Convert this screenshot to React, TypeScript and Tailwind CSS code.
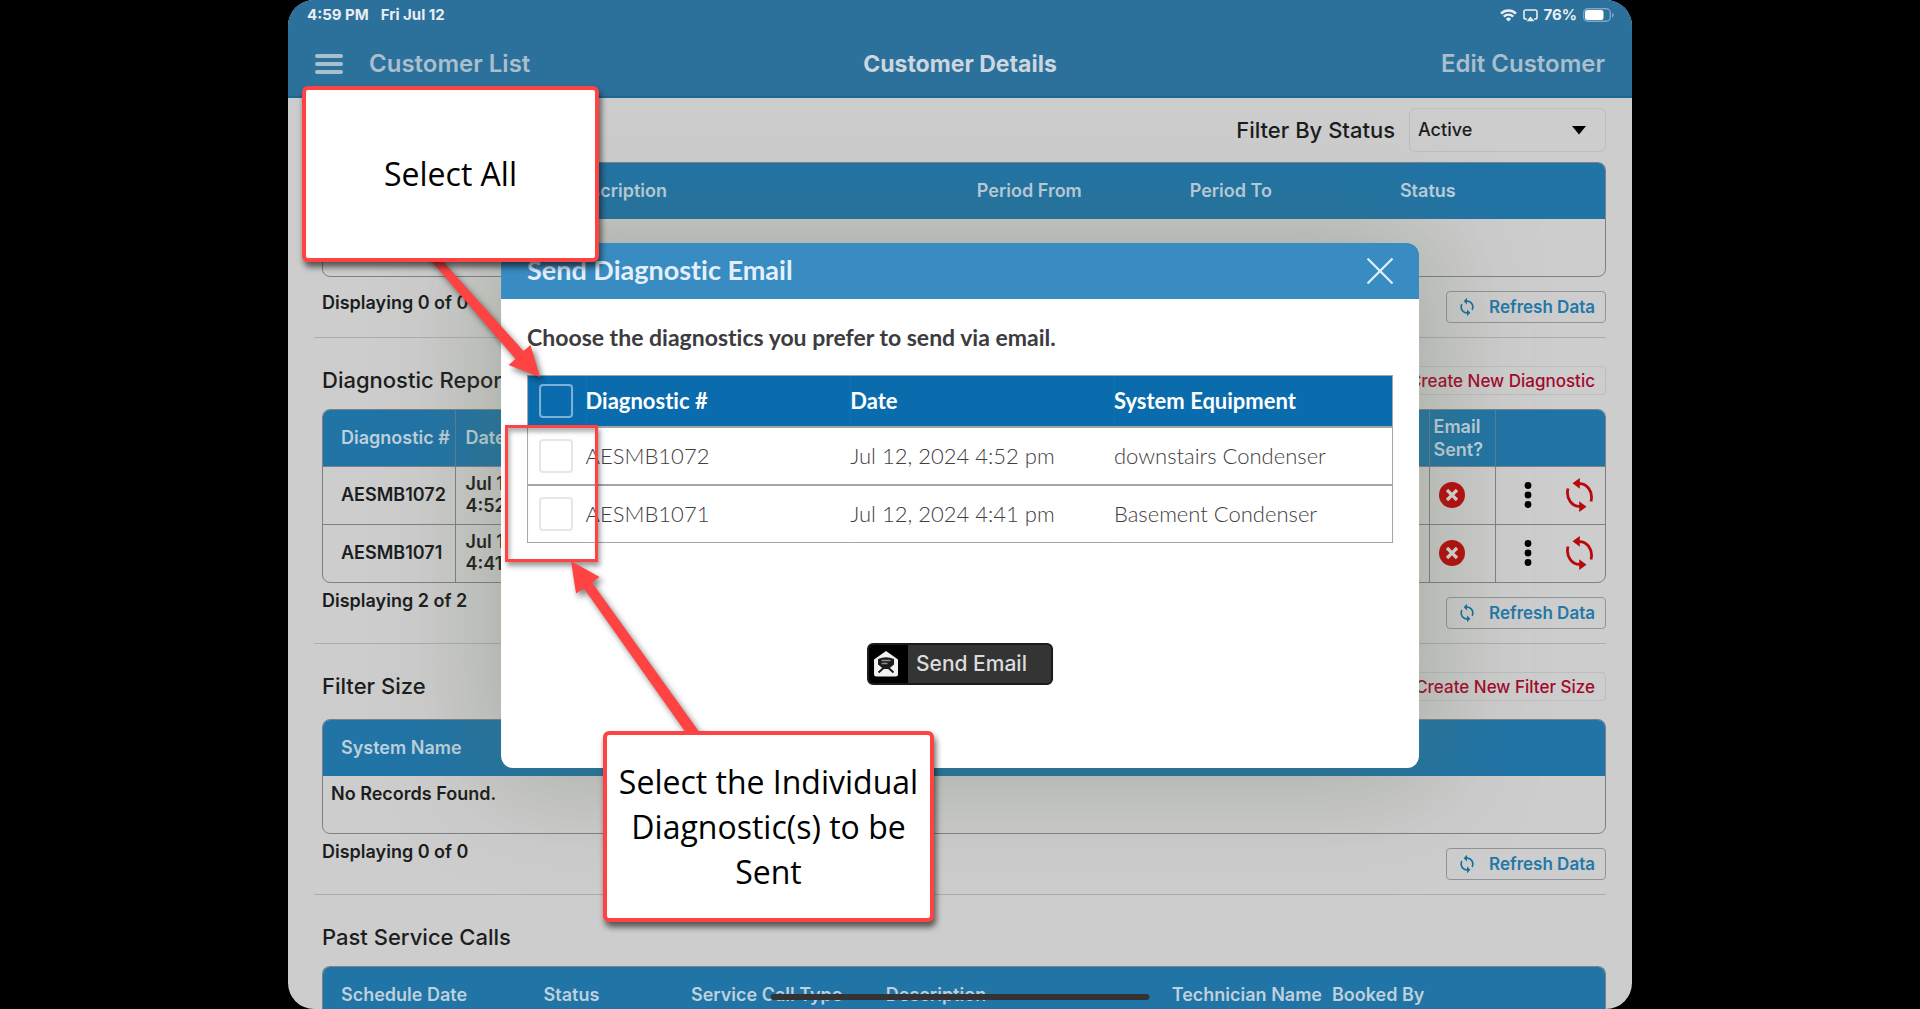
import React from "react";
import { MdSync } from "react-icons/md";

function StatusBar() {
  return (
    <div className="flex h-[30px] items-center justify-between pl-[19px] pr-[18px] text-[15px] font-bold text-[#e8eef2]">
      <div className="flex gap-3">
        <span>4:59 PM</span>
        <span>Fri Jul 12</span>
      </div>
      <div className="flex items-center gap-1.5">
        <svg width="17" height="13" viewBox="0 0 17 13" fill="none" stroke="currentColor" strokeWidth="2.4" aria-hidden="true">
          <path d="M1 4.6a10.6 10.6 0 0 1 15 0" />
          <path d="M3.8 7.6a6.6 6.6 0 0 1 9.4 0" />
          <path d="M8.500 12.600 5.900 9.900a3.700 3.700 0 0 1 5.200 0z" fill="currentColor" stroke="none" />
        </svg>
        <svg width="15" height="13" viewBox="0 0 15 13" fill="none" stroke="currentColor" strokeWidth="1.6" aria-hidden="true">
          <path d="M4 10H2.800A1.800 1.800 0 0 1 1 8.200V2.800A1.800 1.800 0 0 1 2.800 1h9.400A1.800 1.800 0 0 1 14 2.800v5.400a1.800 1.800 0 0 1-1.800 1.800H11" />
          <path d="M7.500 7.500 11.500 12.200h-8z" fill="currentColor" stroke="none" />
        </svg>
        <span>76%</span>
        <svg width="31" height="14" viewBox="0 0 31 14" fill="none" aria-hidden="true">
          <rect x="0.700" y="0.700" width="26.600" height="12.600" rx="4" stroke="#7ea6c1" strokeWidth="1.400" />
          <rect x="2" y="2" width="18.500" height="10" rx="2.500" fill="#fff" />
          <path d="M29 5v4.500c1.200-.4 1.800-1.200 1.800-2.200S30.200 5.400 29 5z" fill="#7ea6c1" />
        </svg>
      </div>
    </div>
  );
}

function NavBar() {
  return (
    <div className="grid h-[66px] grid-cols-3 items-center px-[27px] pt-0.5 text-2xl font-semibold text-[#a9bfcc]">
      <div className="flex items-center gap-[26px]">
        <button type="button" aria-label="Menu" className="flex w-7 flex-col gap-1">
          <span className="h-1 rounded-sm bg-[#a9bfcc]" />
          <span className="h-1 rounded-sm bg-[#a9bfcc]" />
          <span className="h-1 rounded-sm bg-[#a9bfcc]" />
        </button>
        <a href="#customers">Customer List</a>
      </div>
      <h1 className="text-center text-[23px] font-bold text-[#ccd6df]">Customer Details</h1>
      <a href="#edit" className="text-right">Edit Customer</a>
    </div>
  );
}

function TableFrame({ children, open = false }: { children: React.ReactNode; open?: boolean }) {
  return (
    <div className={open ? "overflow-hidden rounded-t-lg border border-b-0 border-[#7d8184]" : "overflow-hidden rounded-lg border border-[#7d8184]"}>
      {children}
    </div>
  );
}

function ColumnHeads({ names }: { names: string[] }) {
  return (
    <thead>
      <tr className="h-14 bg-[#2174a6] text-left text-[#bdd0dc]">
        {names.map((n, i) => (
          <th key={i} className="pl-[18px] font-semibold whitespace-nowrap">{n}</th>
        ))}
      </tr>
    </thead>
  );
}

function SectionFooter({ text, tight = false }: { text: string; tight?: boolean }) {
  return (
    <div className="flex items-start justify-between">
      <p className={tight ? "pt-1.5 leading-6 font-semibold" : "pt-3.5 leading-6 font-semibold"}>{text}</p>
      <button type="button" className="mt-3.5 flex h-8 items-center gap-3 rounded border border-[#8f9497] px-2.5 text-[17px] font-semibold text-[#2478a8]">
        <MdSync className="size-5 text-[#176f9d]" />
        Refresh Data
      </button>
    </div>
  );
}

function SectionTitle({ title, action }: { title: string; action?: string }) {
  return (
    <div className="flex h-[29px] items-center justify-between">
      <h2 className="text-[22px] font-medium">{title}</h2>
      {action && (
        <button type="button" className="h-[29px] rounded border border-[#bbbdbe] px-2.5 text-[17px] leading-6 font-medium text-[#a3092c]">
          {action}
        </button>
      )}
    </div>
  );
}

function ResendIcon() {
  return (
    <svg width="27" height="34" viewBox="0 0 27 34" aria-hidden="true" fill="none" stroke="#b80a0a" strokeWidth="2.800">
      <path d="M12.500 5.600C20.500 5 27.500 13 25 23.500" />
      <path d="M6.500 5.200 13.800 0v10.800z" fill="#b80a0a" stroke="none" />
      <path d="M14.500 28.400C6.500 29-.5 21 2 10.500" />
      <path d="M20.500 28.800 13.200 34V23.200z" fill="#b80a0a" stroke="none" />
    </svg>
  );
}

function ReportRow({ id, time }: { id: string; time: string }) {
  return (
    <tr className="h-[58px] border-t border-[#7d8184] font-semibold">
      <td className="pl-[18px]">{id}</td>
      <td className="border-l border-[#7d8184] pl-2.5 leading-[22px]">Jul 12, 2024<br />{time}</td>
      <td />
      <td className="border-l border-[#7d8184] pl-[9px]">
        <svg width="26" height="26" viewBox="0 0 26 26" role="img" aria-label="Not sent">
          <circle cx="13" cy="13" r="13" fill="#b80a0a" />
          <path d="M8 8l10 10M18 8l-10 10" stroke="#d9d6d6" strokeWidth="3.200" />
        </svg>
      </td>
      <td className="border-l border-[#7d8184] pr-3 pl-7">
        <div className="flex items-center justify-between">
          <button type="button" aria-label="More">
            <svg width="8" height="26" viewBox="0 0 8 26" aria-hidden="true">
              <circle cx="4" cy="3.500" r="3.400" />
              <circle cx="4" cy="13" r="3.400" />
              <circle cx="4" cy="22.500" r="3.400" />
            </svg>
          </button>
          <button type="button" aria-label="Resend"><ResendIcon /></button>
        </div>
      </td>
    </tr>
  );
}

function CustomerPage() {
  return (
    <main className="px-[26px] text-lg text-[#1c1d1e]">
      <section className="border-b border-[#aaaeb0] pt-2.5 pb-3.5 pl-2">
        <div className="flex h-11 items-center justify-end gap-3.5">
          <label htmlFor="status" className="text-[22px] font-medium">Filter By Status</label>
          <div className="relative h-11 w-[197px]">
            <select id="status" className="h-full w-full appearance-none rounded-md border border-[#bcbec0] bg-transparent pl-2 text-lg font-medium">
              <option>Active</option>
            </select>
            <svg className="pointer-events-none absolute top-[18px] right-5" width="14" height="9" viewBox="0 0 14 9" aria-hidden="true">
              <path d="M0 0h14L7 8.500z" />
            </svg>
          </div>
        </div>
        <div className="mt-2.5">
          <TableFrame>
            <table className="w-full table-fixed">
              <colgroup>
                <col className="w-[17.6%]" /><col className="w-[32%]" /><col className="w-[16.6%]" /><col className="w-[16.4%]" /><col />
              </colgroup>
              <ColumnHeads names={["", "Description", "Period From", "Period To", "Status"]} />
              <tbody><tr className="h-[57px]"><td colSpan={5} /></tr></tbody>
            </table>
          </TableFrame>
        </div>
        <SectionFooter text="Displaying 0 of 0" />
      </section>

      <section className="border-b border-[#aaaeb0] pt-7 pb-3.5 pl-2">
        <SectionTitle title="Diagnostic Reports" action="Create New Diagnostic" />
        <div className="mt-3.5">
          <TableFrame>
            <table className="w-full table-fixed border-collapse">
              <colgroup>
                <col className="w-[132px]" /><col className="w-[144px]" /><col /><col className="w-[66px]" /><col className="w-[110px]" />
              </colgroup>
              <thead>
                <tr className="h-14 bg-[#2174a6] text-left leading-[23px] text-[#bdd0dc]">
                  <th className="pl-[18px] font-semibold whitespace-nowrap">Diagnostic #</th>
                  <th className="border-l border-[#5c7f92] pl-2.5 font-semibold">Date</th>
                  <th />
                  <th className="border-l border-[#5c7f92] pl-1 font-semibold">Email Sent?</th>
                  <th className="border-l border-[#5c7f92]" />
                </tr>
              </thead>
              <tbody>
                <ReportRow id="AESMB1072" time="4:52 PM" />
                <ReportRow id="AESMB1071" time="4:41 PM" />
              </tbody>
            </table>
          </TableFrame>
        </div>
        <SectionFooter text="Displaying 2 of 2" tight />
      </section>

      <section className="border-b border-[#aaaeb0] pt-7 pb-3.5 pl-2">
        <SectionTitle title="Filter Size" action="Create New Filter Size" />
        <div className="mt-[18px]">
          <TableFrame>
            <table className="w-full">
              <ColumnHeads names={["System Name"]} />
              <tbody><tr className="h-[57px]"><td className="pt-1 pl-2 align-top font-semibold">No Records Found.</td></tr></tbody>
            </table>
          </TableFrame>
        </div>
        <SectionFooter text="Displaying 0 of 0" tight />
      </section>

      <section className="pt-7 pl-2">
        <SectionTitle title="Past Service Calls" />
        <div className="mt-3.5">
          <TableFrame open>
            <table className="w-full table-fixed">
              <colgroup>
                <col className="w-[15.8%]" /><col className="w-[11.5%]" /><col className="w-[15.2%]" /><col className="w-[22.3%]" /><col className="w-[12.5%]" /><col />
              </colgroup>
              <ColumnHeads names={["Schedule Date", "Status", "Service Call Type", "Description", "Technician Name", "Booked By"]} />
            </table>
          </TableFrame>
        </div>
      </section>
    </main>
  );
}

const diagnostics = [
  { id: "AESMB1072", date: "Jul 12, 2024 4:52 pm", equipment: "downstairs Condenser" },
  { id: "AESMB1071", date: "Jul 12, 2024 4:41 pm", equipment: "Basement Condenser" },
];

function EmailDialog() {
  return (
    <div role="dialog" aria-labelledby="dialog-title" className="absolute top-[243px] left-1/2 w-[68.3%] -translate-x-1/2 overflow-hidden rounded-xl bg-white font-['Lato',sans-serif] shadow-[0_0_110px_10px_rgba(90,105,75,0.35)] [font-variant-ligatures:none]">
      <header className="flex h-14 items-center justify-between bg-[#388cc1] px-[26px] text-[#e3effc]">
        <h2 id="dialog-title" className="pb-0.5 text-[27px] leading-8 font-bold">Send Diagnostic Email</h2>
        <button type="button" aria-label="Close">
          <svg width="26" height="26" viewBox="0 0 26 26" stroke="currentColor" strokeWidth="2.200" aria-hidden="true">
            <path d="M0.500 0.500l25 25M25.500 0.500l-25 25" />
          </svg>
        </button>
      </header>
      <div className="px-[26px] pt-6 pb-[83px]">
        <p className="text-[23px] leading-7 font-bold text-[#3c3c40]">Choose the diagnostics you prefer to send via email.</p>
        <table className="mt-6 w-full table-fixed border-collapse border border-[#a3a5a7] text-left text-[22px]">
          <colgroup>
            <col className="w-[58px]" /><col /><col className="w-[30.5%]" /><col className="w-[32.2%]" />
          </colgroup>
          <thead>
            <tr className="h-[51px] bg-[#0b6cad] text-white">
              <th className="pl-[11px]">
                <input type="checkbox" aria-label="Select all diagnostics" className="block size-[34px] appearance-none rounded border-2 border-[#7fb0d8] bg-transparent" />
              </th>
              <th className="font-bold">Diagnostic #</th>
              <th className="font-bold">Date</th>
              <th className="font-bold">System Equipment</th>
            </tr>
          </thead>
          <tbody>
            {diagnostics.map((d) => (
              <tr key={d.id} className="h-[58px] border-t-2 border-[#a3a5a7] font-light text-[#3f4044]">
                <td className="pl-[11px]">
                  <input type="checkbox" aria-label={d.id} className="block size-[34px] appearance-none rounded border-2 border-[#e6e6e6] bg-white" />
                </td>
                <td>{d.id}</td>
                <td>{d.date}</td>
                <td>{d.equipment}</td>
              </tr>
            ))}
          </tbody>
        </table>
        <button type="button" className="mx-auto mt-[100px] flex h-[42px] w-[186px] items-stretch overflow-hidden rounded-md border-2 border-[#1b1b1b] bg-[#343434] font-['Inter',sans-serif] text-[21px] font-medium text-[#dcdcdc]">
          <span className="flex w-[39px] items-center justify-center bg-black pr-1">
            <svg width="26" height="26" viewBox="0 0 26 26" aria-hidden="true">
              <path d="M13 0 25 8.500V23a2.500 2.500 0 0 1-2.500 2.500h-19A2.500 2.500 0 0 1 1 23V8.500z" fill="#f2f2f2" />
              <path d="M5 8Q13 4.500 21 8v5.500L15.500 18h-5L5 13.500z" fill="#1b1b1b" />
              <path d="M8.500 9.500h9M8.500 12.500h6" stroke="#8a8a8a" strokeWidth="1.500" />
              <path d="M10.500 17 5.500 21.500M15.500 17l5 4.500" stroke="#1b1b1b" strokeWidth="2" fill="none" />
            </svg>
          </span>
          <span className="self-center pl-2">Send Email</span>
        </button>
      </div>
    </div>
  );
}

function Annotations() {
  return (
    <div className="pointer-events-none font-['Open_Sans',sans-serif] text-[32px] leading-[45px] text-black">
      <div className="absolute top-[425px] left-[217px] h-[137px] w-[93px] border-3 border-[#ff4343] shadow-[inset_2px_4px_4px_rgba(0,0,0,0.3),2px_4px_5px_rgba(0,0,0,0.4)]" />
      <svg className="absolute top-[250px] left-[137px] drop-shadow-[3px_4px_3px_rgba(0,0,0,0.5)]" width="290" height="490" viewBox="425 250 290 490" fill="#ff4343" aria-hidden="true">
        <path d="M422 250h10.500L523.500 351 530.500 345 540 377 508.500 365 515.500 359z" />
        <path d="M571 561 599.500 577 592 582.500 705 740H691L584 588.500 576 593.500z" />
      </svg>
      <div className="absolute top-[86px] left-[14px] flex h-[176px] w-[297px] items-center justify-center rounded-md border-4 border-[#ff4343] bg-white pb-0.5 text-center shadow-[2px_5px_6px_rgba(0,0,0,0.6)]">
        Select All
      </div>
      <div className="absolute top-[731px] left-[315px] h-[191px] w-[331px] rounded-md border-4 border-[#ff4343] bg-white pt-6 text-center shadow-[2px_5px_6px_rgba(0,0,0,0.6)]">
        Select the Individual Diagnostic(s) to be Sent
      </div>
    </div>
  );
}

export default function App() {
  return (
    <div className="flex h-screen justify-center overflow-hidden bg-black font-['Inter',sans-serif]">
      <div className="relative w-[70%]">
        <div className="relative h-full overflow-hidden rounded-[26px] bg-[#cdcdcd]">
          <header className="border-b-2 border-[#1d6891] bg-[#2c709c]">
            <StatusBar />
            <NavBar />
          </header>
          <CustomerPage />
          <EmailDialog />
          <div className="absolute bottom-[9px] left-1/2 h-1.5 w-[28.2%] -translate-x-1/2 rounded-full bg-[#333333]" />
        </div>
        <Annotations />
      </div>
    </div>
  );
}
